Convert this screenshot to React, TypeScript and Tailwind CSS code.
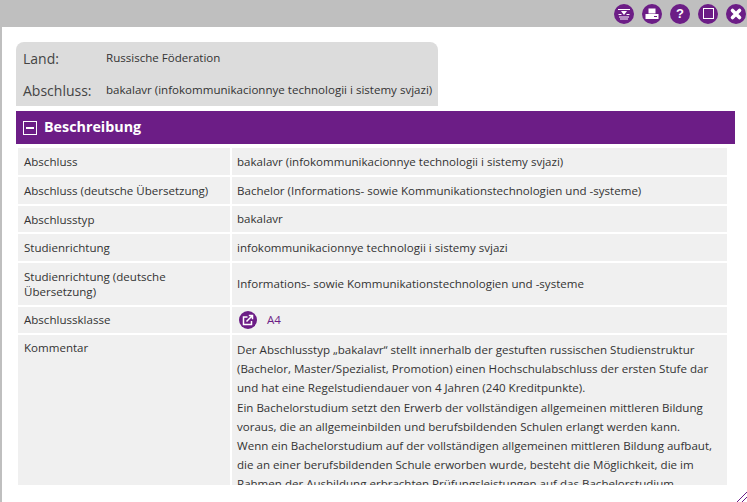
const rows: { label: string; value: string; h: string }[] = [
  { label: 'Abschluss', value: 'bakalavr (infokommunikacionnye technologii i sistemy svjazi)', h: 'h-[27px]' },
  { label: 'Abschluss (deutsche Übersetzung)', value: 'Bachelor (Informations- sowie Kommunikationstechnologien und -systeme)', h: 'h-[27px]' },
  { label: 'Abschlusstyp', value: 'bakalavr', h: 'h-[26px]' },
  { label: 'Studienrichtung', value: 'infokommunikacionnye technologii i sistemy svjazi', h: 'h-[27px]' },
  { label: 'Studienrichtung (deutsche Übersetzung)', value: 'Informations- sowie Kommunikationstechnologien und -systeme', h: 'h-[42px]' },
];

function ToolButton({ children }: { children: React.ReactNode }) {
  return (
    <div className="w-5 h-5 rounded-full bg-[#6c1d86] flex items-center justify-center text-white">
      {children}
    </div>
  );
}

export default function App() {
  return (
    <div className="w-[747px] h-[502px] overflow-hidden bg-white relative font-['Open_Sans',sans-serif] text-[#333] flex flex-col">
      <div className="h-[27px] bg-[#bfbfbf] flex items-center justify-end gap-2 pr-[1px] shrink-0">
        <ToolButton>
          <svg width="14" height="12" viewBox="0 0 14 12" fill="none" stroke="currentColor">
            <path d="M1 1.5h12M2 9h10M3 11h8" />
            <path d="M4 3h6L7 7z" fill="currentColor" stroke="none" />
            <path d="M1.5 6.5h3M9.5 6.5h3" />
          </svg>
        </ToolButton>
        <ToolButton>
          <svg width="14" height="12" viewBox="0 0 14 12" fill="currentColor">
            <path d="M3.5 0.5h7v5h-7zM0.5 6h13v5h-13z" />
            <path d="M9 8.5h3" stroke="#6c1d86" />
          </svg>
        </ToolButton>
        <ToolButton>
          <span className="text-[13px] leading-none font-bold font-['Liberation_Sans',sans-serif]">?</span>
        </ToolButton>
        <ToolButton>
          <div className="w-[11px] h-[11px] border-[1.5px] border-white" />
        </ToolButton>
        <ToolButton>
          <svg width="14" height="14" viewBox="0 0 14 14" stroke="currentColor" strokeWidth="3.6" strokeLinecap="round">
            <path d="M3.5 3.5l7 7M10.5 3.5l-7 7" />
          </svg>
        </ToolButton>
      </div>

      <div className="flex-1 border-l-2 border-[#bfbfbf] pl-[14px] pr-3 pt-[15px] min-h-0 flex flex-col">
        <div className="w-[422px] h-16 bg-[#dcdcdc] rounded-t-lg pl-2 pt-[6px] shrink-0">
          <div className="flex items-center h-[20px]">
            <span className="w-[83px] -ml-px text-[14px] text-[#444]">Land:</span>
            <span className="text-[11.55px] whitespace-nowrap">Russische Föderation</span>
          </div>
          <div className="flex items-center h-[20px] mt-[12px]">
            <span className="w-[83px] -ml-px text-[14px] text-[#444]">Abschluss:</span>
            <span className="text-[11.55px] whitespace-nowrap">bakalavr (infokommunikacionnye technologii i sistemy svjazi)</span>
          </div>
        </div>

        <div className="mt-[5px] h-[33px] w-[719px] bg-[#6c1d86] flex items-center pl-[7px] gap-[7px] text-white shrink-0">
          <div className="w-[14px] h-[14px] border border-white flex items-center justify-center">
            <div className="w-2 h-[2px] bg-white" />
          </div>
          <span className="text-[14.3px] font-bold -mt-[2px]">Beschreibung</span>
        </div>

        <div className="h-[341px] overflow-hidden w-[711px] pl-[2px] pt-[4px] flex flex-col gap-[2px] text-[11.55px]">
          {rows.map((r) => (
            <div key={r.label} className="flex gap-[2px]">
              <div className={`w-[212px] ${r.h} bg-[#f0f0f0] px-[6px] flex items-center leading-[15px]`}>{r.label}</div>
              <div className={`w-[495px] ${r.h} bg-[#f0f0f0] px-[5px] flex items-center`}>{r.value}</div>
            </div>
          ))}
          <div className="flex gap-[2px]">
            <div className="w-[212px] h-[26px] bg-[#f0f0f0] px-[6px] flex items-center">Abschlussklasse</div>
            <div className="w-[495px] h-[26px] bg-[#f0f0f0] pl-[7px] flex items-center gap-[10px]">
              <div className="w-[18px] h-[18px] rounded-full bg-[#6c1d86] flex items-center justify-center">
                <svg width="12" height="12" viewBox="0 0 12 12" fill="none" stroke="white" strokeWidth="1.5">
                  <path d="M5.5 3H1.5v7.5h8V7" />
                  <path d="M4.5 7.5L10 2M6.8 1.5h3.7v3.7" />
                </svg>
              </div>
              <span className="text-[#6c1d86]">A4</span>
            </div>
          </div>
          <div className="flex gap-[2px]">
            <div className="w-[212px] bg-[#f0f0f0] px-[6px] pt-1">Kommentar</div>
            <div className="w-[495px] bg-[#f0f0f0] px-[5px] pt-[5px] leading-[19.2px]">
              <p>Der Abschlusstyp „bakalavr“ stellt innerhalb der gestuften russischen Studienstruktur (Bachelor, Master/Spezialist, Promotion) einen Hochschulabschluss der ersten Stufe dar und hat eine Regelstudiendauer von 4 Jahren (240 Kreditpunkte).</p>
              <p>Ein Bachelorstudium setzt den Erwerb der vollständigen allgemeinen mittleren Bildung voraus, die an allgemeinbilden und berufsbildenden Schulen erlangt werden kann.</p>
              <p>Wenn ein Bachelorstudium auf der vollständigen allgemeinen mittleren Bildung aufbaut, die an einer berufsbildenden Schule erworben wurde, besteht die Möglichkeit, die im Rahmen der Ausbildung erbrachten Prüfungsleistungen auf das Bachelorstudium anzurechnen.</p>
            </div>
          </div>
        </div>
      </div>

      <svg className="absolute right-0 bottom-0" width="10" height="10" viewBox="0 0 10 10" stroke="#6c1d86" fill="none">
        <path d="M0 10L10 0M5 10L10 5" />
      </svg>
    </div>
  );
}
